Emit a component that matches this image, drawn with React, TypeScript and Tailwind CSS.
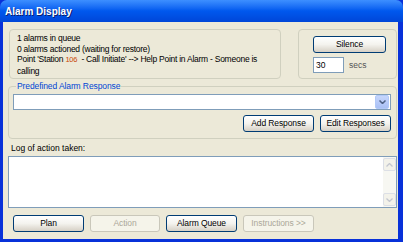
import React from "react";

function XpButton({
  children,
  disabled,
  className = "",
}: {
  children: React.ReactNode;
  disabled?: boolean;
  className?: string;
}) {
  return (
    <button
      disabled={disabled}
      className={`h-[17px] rounded-[3px] border text-[8.5px] leading-none tracking-[-0.1px] ${
        disabled
          ? "border-[#c9c7ba] bg-[#f5f4ea] text-[#aca899]"
          : "border-[#003c74] bg-gradient-to-b from-white via-[#f4f3ee] to-[#d6d0c5] text-black"
      } ${className}`}
    >
      {children}
    </button>
  );
}

function ScrollArrow({ up }: { up?: boolean }) {
  return (
    <div className="flex h-[13px] w-full items-center justify-center rounded-[2px] border border-[#dcdfe6] bg-[#f3f2ea]">
      <svg width="7" height="4" viewBox="0 0 7 4">
        <path
          d={up ? "M0.5 3.5 L3.5 0.5 L6.5 3.5" : "M0.5 0.5 L3.5 3.5 L6.5 0.5"}
          fill="none"
          stroke="#c3c6cf"
          strokeWidth="1.3"
        />
      </svg>
    </div>
  );
}

export default function App() {
  return (
    <div
      className="flex h-[242px] w-[403px] flex-col bg-[#0831d9] pb-[3px] pl-[3px] pr-[5px] text-[8.5px] text-black"
      style={{ fontFamily: '"Liberation Sans", Arial, sans-serif' }}
    >
      {/* Title bar */}
      <div className="-ml-[3px] -mr-[5px] flex h-[22px] items-center rounded-t-[7px] bg-gradient-to-b from-[#3d8fff] via-[#0058ee] to-[#0046d8] pl-[5px]">
        <span className="text-[10px] font-bold text-white [text-shadow:1px_1px_0_#0a1e6e]">Alarm Display</span>
      </div>

      {/* Body */}
      <div className="flex flex-1 flex-col bg-[#ece9d8] pl-[5px] pr-[1px]">
        {/* Top row */}
        <div className="mt-[7px] flex h-[50px] gap-[17px] pl-[1px]">
          <div className="w-[272px] rounded-[4px] border border-[#d0d0bf] pl-[7px] pt-[3px] leading-[10.5px] tracking-[-0.25px]">
            <div>1 alarms in queue</div>
            <div>0 alarms actioned (waiting for restore)</div>
            <div>
              Point 'Station <span className="text-[7.5px] text-[#c8480a]">106</span>&nbsp; - Call Initiate' --&gt; Help
              Point in Alarm - Someone is
            </div>
            <div>calling</div>
          </div>
          <div className="flex flex-1 flex-col rounded-[4px] border border-[#d0d0bf] pl-[14px] pt-[6px]">
            <XpButton className="w-[73px]">Silence</XpButton>
            <div className="mt-[4px] flex items-center">
              <div className="flex h-[16px] w-[31px] items-center border border-[#7f9db9] bg-white pl-[2px]">30</div>
              <span className="ml-[5px] text-[#555]">secs</span>
            </div>
          </div>
        </div>

        {/* Predefined alarm response group */}
        <fieldset className="mt-[2px] h-[58px] rounded-[4px] border border-[#d0d0bf] pl-[4px] pr-[5px]">
          <legend className="ml-[3px] px-[1px] leading-[11px] tracking-[-0.1px] text-[#0046d5]">
            Predefined Alarm Response
          </legend>
          <div className="mt-[2px] flex h-[16px] items-center border border-[#7f9db9] bg-white pr-[1px]">
            <div className="flex-1" />
            <div className="flex h-[14px] w-[14px] items-center justify-center rounded-[2px] border border-[#b1c9f8] bg-gradient-to-b from-[#c6d6fc] to-[#a9c0f5]">
              <svg width="7" height="4" viewBox="0 0 7 4">
                <path d="M0.5 0.5 L3.5 3.5 L6.5 0.5" fill="none" stroke="#4d6185" strokeWidth="1.5" />
              </svg>
            </div>
          </div>
          <div className="mt-[5px] flex justify-end gap-[6px]">
            <XpButton className="w-[71px]">Add Response</XpButton>
            <XpButton className="w-[71px]">Edit Responses</XpButton>
          </div>
        </fieldset>

        <div className="mt-[4px] pl-[3px] leading-[10px]">Log of action taken:</div>

        {/* Log textarea */}
        <div className="mt-[3px] flex h-[52px] border border-[#7f9db9] bg-white">
          <div className="flex-1" />
          <div className="flex w-[13px] flex-col justify-between bg-[#f7f7f2] pb-[1px] pt-[1px]">
            <ScrollArrow up />
            <ScrollArrow />
          </div>
        </div>

        {/* Bottom buttons */}
        <div className="mt-[7px] flex gap-[6px] pl-[5px]">
          <XpButton className="w-[71px]">Plan</XpButton>
          <XpButton className="w-[70px]" disabled>
            Action
          </XpButton>
          <XpButton className="w-[71px]">Alarm Queue</XpButton>
          <XpButton className="w-[71px]" disabled>
            Instructions &gt;&gt;
          </XpButton>
        </div>
      </div>
    </div>
  );
}
